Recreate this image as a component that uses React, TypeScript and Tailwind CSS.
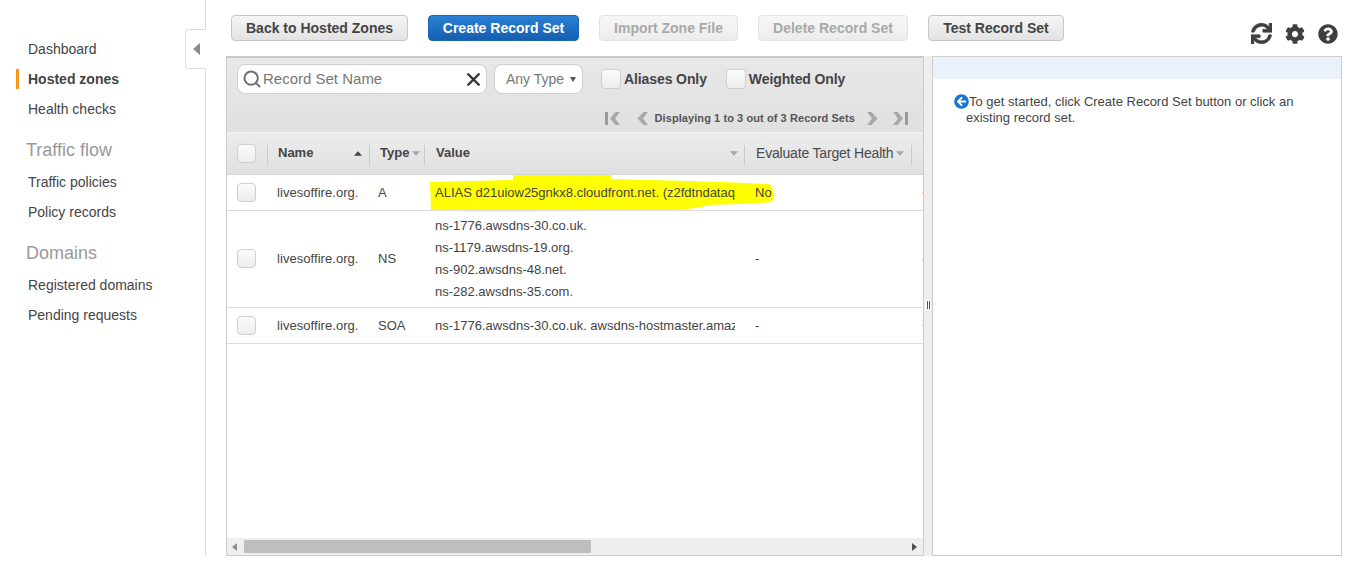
import React from "react";
import { FaSync, FaCog, FaQuestionCircle, FaArrowCircleLeft } from "react-icons/fa";
import { Search, X } from "lucide-react";

function Btn({ label, kind = "normal", w }: { label: string; kind?: "normal" | "primary" | "off"; w: string }) {
  const base = "h-[26px] rounded-[4px] border text-[14px] font-bold flex items-center justify-center shrink-0 ";
  const styles = {
    normal: "border-[#c6c6c6] bg-gradient-to-b from-[#f6f6f6] to-[#e2e2e2] text-[#444444]",
    primary: "border-[#1a66b8] bg-gradient-to-b from-[#2a80d4] to-[#155fb0] text-white",
    off: "border-[#e2e2e2] bg-gradient-to-b from-[#f7f7f7] to-[#ececec] text-[#a9a9a9]",
  }[kind];
  return <div className={base + styles + " " + w}>{label}</div>;
}

function Check({ className = "" }: { className?: string }) {
  return <div className={"w-[19px] h-[19px] rounded-[4px] border border-[#cfcfcf] bg-gradient-to-b from-[#fbfbfb] to-[#ededed] shrink-0 " + className} />;
}

function NavItem({ label, active }: { label: string; active?: boolean }) {
  return (
    <div className="relative h-[30px] flex items-center pl-[28px]">
      {active && <div className="absolute left-[16px] top-[5px] w-[3px] h-[20px] bg-[#f7981d]" />}
      <span className={active ? "font-bold text-[#444444]" : "text-[#444444]"}>{label}</span>
    </div>
  );
}

function Sep() {
  return <div className="absolute right-0 top-[12px] w-px h-[20px] bg-[#c9c9c9]" />;
}

function Caret({ up }: { up?: boolean }) {
  return (
    <svg width="8" height="5" viewBox="0 0 9 5" className="shrink-0">
      <path d={up ? "M0 5 L4.5 0 L9 5 Z" : "M0 0 L9 0 L4.5 5 Z"} fill={up ? "#444444" : "#a6a6a6"} />
    </svg>
  );
}

function Pager({ dir, bar }: { dir: "l" | "r"; bar?: boolean }) {
  const flip = dir === "r";
  return (
    <svg width="16" height="15" viewBox="0 0 16 15" className="shrink-0">
      <g transform={flip ? "translate(16,0) scale(-1,1)" : undefined} fill="#a8a8a8">
        {bar && <rect x="0" y="1" width="3" height="13" fill="#9a9a9a" />}
        <path d={bar ? "M10.5 1 L15 1 L10 7.5 L15 14 L10.5 14 L5 7.5 Z" : "M8.5 1 L13 1 L8 7.5 L13 14 L8.5 14 L2.5 7.5 Z"} />
      </g>
    </svg>
  );
}

function Row({ h, name, type, value, health, tick }: { h: string; name: string; type: string; value: React.ReactNode; health: string; tick: string }) {
  return (
    <div className={"relative flex items-center border-b border-[#dddddd] text-[13px] text-[#444444] shrink-0 " + h}>
      <div className="w-[41px] pl-[10px] shrink-0"><Check /></div>
      <div className="w-[102px] pl-[9px] shrink-0 tracking-[0.05px]">{name}</div>
      <div className="w-[55px] pl-[8px] shrink-0">{type}</div>
      <div className="w-[320px] pl-[10px] shrink-0">
        <div className="w-[300px] overflow-hidden whitespace-nowrap">{value}</div>
      </div>
      <div className="pl-[10px]">{health}</div>
      <div className={"absolute right-0 w-px h-px bg-[#f0b060] " + tick} />
    </div>
  );
}

export default function App() {
  return (
    <div className="relative w-[1356px] h-[564px] overflow-hidden bg-white flex font-['Liberation_Sans',Arial,sans-serif] text-[14px] text-[#444444]">
      <aside className="relative w-[206px] h-[556px] border-r border-[#dddddd] shrink-0 pt-[34px]">
        <NavItem label="Dashboard" />
        <NavItem label="Hosted zones" active />
        <NavItem label="Health checks" />
        <div className="pl-[26px] mt-[10px] h-[33px] flex items-center text-[18px] text-[#999999]">Traffic flow</div>
        <NavItem label="Traffic policies" />
        <NavItem label="Policy records" />
        <div className="pl-[26px] mt-[10px] h-[32px] flex items-center text-[18px] text-[#999999]">Domains</div>
        <div className="mt-[1px]">
          <NavItem label="Registered domains" />
          <NavItem label="Pending requests" />
        </div>
        <div className="absolute left-[185px] top-[29px] w-[21px] h-[40px] bg-white border border-r-0 border-[#dddddd] rounded-l-[4px] flex items-center justify-center">
          <svg width="7" height="12" viewBox="0 0 7 12"><path d="M7 0 V12 L0 6 Z" fill="#8a8a8a" /></svg>
        </div>
      </aside>

      <main className="flex-1 min-w-0 pl-[20px] pt-[15px] flex flex-col">
        <div className="relative flex h-[26px] gap-[20px] pl-[5px] shrink-0">
          <Btn label="Back to Hosted Zones" w="w-[177px]" />
          <Btn label="Create Record Set" kind="primary" w="w-[151px]" />
          <Btn label="Import Zone File" kind="off" w="w-[139px]" />
          <Btn label="Delete Record Set" kind="off" w="w-[150px]" />
          <Btn label="Test Record Set" w="w-[136px]" />
          <div className="absolute left-[1025px] top-[8px] flex items-center gap-[13px] text-[#3f3f3f]">
            <FaSync size={21} stroke="currentColor" strokeWidth={16} />
            <FaCog size={20} />
            <FaQuestionCircle size={20} />
          </div>
        </div>

        <div className="flex mt-[15px] h-[500px]">
          <section className="relative w-[698px] h-full border border-[#cccccc] flex flex-col overflow-hidden shrink-0">
            <div className="h-[75px] bg-gradient-to-b from-[#e8e8e8] to-[#e0e0e0] border-t border-[#c4c4c4] shrink-0">
              <div className="flex items-center h-[42px] pl-[10px]">
                <div className="w-[250px] h-[30px] bg-white rounded-[8px] border border-[#cfcfcf] flex items-center pl-[4px] pr-[2px] shrink-0">
                  <Search size={20} strokeWidth={2.4} className="text-[#6f6f6f] shrink-0" />
                  <span className="flex-1 text-[15px] text-[#777777] ml-[1px]">Record Set Name</span>
                  <X size={21} strokeWidth={2.8} className="text-[#333333]" />
                </div>
                <div className="ml-[7px] w-[89px] h-[30px] bg-white rounded-[8px] border border-[#cfcfcf] flex items-center pl-[11px] shrink-0 text-[#777777]">
                  <span>Any Type</span>
                  <svg width="6" height="6" viewBox="0 0 6 6" className="ml-[6px]"><path d="M0 1 H6 L3 6 Z" fill="#555555" /></svg>
                </div>
                <Check className="ml-[18px] !w-[20px] !h-[20px]" />
                <span className="ml-[3px] font-bold tracking-[-0.1px]">Aliases Only</span>
                <Check className="ml-[19px] !w-[20px] !h-[20px]" />
                <span className="ml-[3px] font-bold tracking-[-0.1px]">Weighted Only</span>
              </div>
              <div className="flex items-center justify-end h-[18px] mt-[9px] pr-[15px] text-[11px] font-bold text-[#555555]">
                <Pager dir="l" bar />
                <div className="w-[14px]" />
                <Pager dir="l" />
                <span className="ml-[4px] mr-[9px] tracking-[0.08px]">Displaying 1 to 3 out of 3 Record Sets</span>
                <Pager dir="r" />
                <div className="w-[12px]" />
                <Pager dir="r" bar />
              </div>
            </div>
            <div className="relative flex items-center h-[43px] pb-[1px] bg-gradient-to-b from-[#ededed] to-[#e0e0e0] border-t border-[#f5f5f5] border-b border-b-[#d5d5d5] font-bold text-[13px] shrink-0">
              <div className="relative w-[41px] h-full pl-[10px] flex items-center shrink-0"><Check /><Sep /></div>
              <div className="relative w-[102px] h-full pl-[10px] pr-[8px] flex items-center justify-between shrink-0">Name<Caret up /><Sep /></div>
              <div className="relative w-[55px] h-full pl-[10px] flex items-center gap-[3px] shrink-0">Type<Caret /><Sep /></div>
              <div className="relative w-[320px] h-full pl-[11px] pr-[7px] flex items-center justify-between shrink-0">Value<Caret /><Sep /></div>
              <div className="relative w-[167px] h-full pl-[11px] flex items-center gap-[3px] shrink-0 font-normal whitespace-nowrap"><span className="text-[14px] text-[#4a4a4a] tracking-[-0.18px]">Evaluate Target Health</span><Caret /><Sep /></div>
            </div>
            <div className="relative h-[35px] shrink-0">
              <svg className="absolute left-[202px] top-[0px] w-[346px] h-[37px] z-0" viewBox="0 0 346 37" preserveAspectRatio="none">
                <path d="M1 7 L84 5 L84 0 L182 0 L182 4 C230 5 300 7 340 9 C345 12 345 22 343 27 C320 29 300 29 280 30 C270 33 250 36 215 36 C150 36 60 37 2 36 Z" fill="#ffff00" />
              </svg>
              <div className="absolute inset-0 z-10">
                <Row h="h-[36px]" name="livesoffire.org." type="A" value="ALIAS d21uiow25gnkx8.cloudfront.net. (z2fdtndataq" health="No" tick="top-[17px]" />
              </div>
            </div>
            <div className="mt-[1px]">
              <Row
                h="h-[97px] pb-[1px]"
                name="livesoffire.org."
                type="NS"
                value={
                  <div className="leading-[22px]">
                    <div>ns-1776.awsdns-30.co.uk.</div>
                    <div>ns-1179.awsdns-19.org.</div>
                    <div>ns-902.awsdns-48.net.</div>
                    <div>ns-282.awsdns-35.com.</div>
                  </div>
                }
                health="-"
                tick="top-[48px]"
              />
              <Row h="h-[36px]" name="livesoffire.org." type="SOA" value="ns-1776.awsdns-30.co.uk. awsdns-hostmaster.amaz" health="-" tick="top-[17px]" />
            </div>
            <div className="flex-1" />
            <div className="h-[17px] bg-[#efefef] flex items-center shrink-0">
              <svg width="6" height="8" viewBox="0 0 6 8" className="ml-[5px]"><path d="M5 0 V8 L0 4 Z" fill="#8f8f8f" /></svg>
              <div className="ml-[6px] w-[347px] h-[13px] bg-[#bebebe]" />
              <div className="flex-1" />
              <svg width="6" height="8" viewBox="0 0 6 8" className="mr-[5px]"><path d="M0 0 V8 L5 4 Z" fill="#505050" /></svg>
            </div>
          </section>

          <div className="relative w-[8px] h-full bg-[#eeeeee] shrink-0">
            <div className="absolute left-[1px] top-[244px] w-[6px] h-[10px] bg-white flex justify-center gap-[1px] py-[1px]">
              <div className="w-px h-full bg-[#555555]" />
              <div className="w-px h-full bg-[#555555]" />
            </div>
          </div>

          <section className="w-[410px] h-full border border-[#cccccc] shrink-0">
            <div className="h-[22px] bg-[#eaf1fb]" />
            <div className="relative pl-[33px] pr-[30px] pt-[15px] text-[13px] leading-[16px] text-[#444444]">
              <FaArrowCircleLeft size={15} className="absolute left-[21px] top-[15px] text-[#1b74d2]" />
              <div className="indent-[3px]">To get started, click Create Record Set button or click an existing record set.</div>
            </div>
          </section>
        </div>
      </main>
    </div>
  );
}
